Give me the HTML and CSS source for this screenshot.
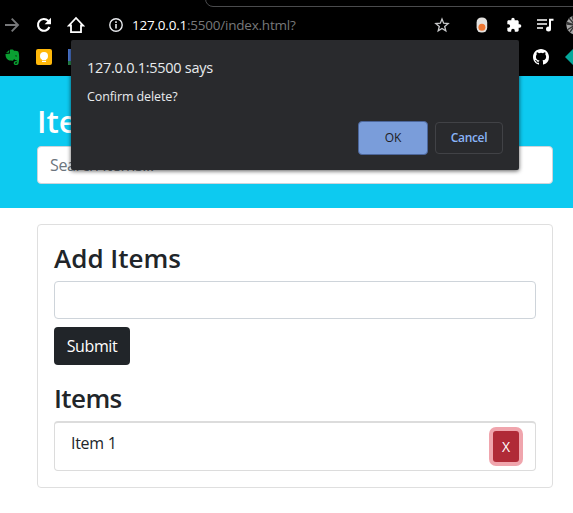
FILE: index.html
```
<!DOCTYPE html>
<html lang="en">
<head>
<meta charset="utf-8">
<title>Item Lister</title>
<link rel="stylesheet" href="styles.css">
</head>
<body>
<div class="chrome">
  <div class="tabs"><div class="tab-edge"></div></div>
  <div class="toolbar">
    <svg class="forward" width="16" height="16" viewBox="0 0 16 16"><path d="M1 8h13M7.7 1.7 14 8l-6.3 6.3" fill="none" stroke="#77787a" stroke-width="1.9"/></svg>
    <svg class="reload" width="16" height="16" viewBox="0 0 16 16"><path d="M13.4 10A5.9 5.9 0 1 1 12.2 3.8L14 5.6" fill="none" stroke="#fff" stroke-width="2.1"/><path d="M15 .8v6.4H8.6z" fill="#fff"/></svg>
    <svg class="home" width="18" height="18" viewBox="0 0 18 18"><path d="M1.900 9.500 9 2l7.100 7.500H14V16.200H4V9.500z" fill="none" stroke="#fff" stroke-width="1.800"/></svg>
    <svg class="info" width="16" height="16" viewBox="0 0 16 16"><circle cx="8" cy="8" r="6.2" fill="none" stroke="#e8eaed" stroke-width="1.4"/><path d="M8 7v4.500M8 4.300v1.700" stroke="#e8eaed" stroke-width="1.600"/></svg>
    <div class="url"><b>127.0.0.1</b>:5500/index.html?</div>
    <svg class="star" width="16" height="16" viewBox="0 0 16 16"><path d="m8 2 1.650 4.200 4.500.3-3.450 2.900 1.100 4.400L8 11.400l-3.800 2.400 1.100-4.400-3.450-2.900 4.500-.3z" fill="none" stroke="#c8c9cb" stroke-width="1.300"/></svg>
    <svg class="toggle" width="12" height="16" viewBox="0 0 12 16"><rect x=".6" y=".4" width="10.600" height="15.200" rx="5" fill="#e3e1df"/><circle cx="5.900" cy="10.300" r="3.500" fill="#ec7632"/></svg>
    <svg class="puzzle" width="16" height="16" viewBox="0 0 24 24"><path d="M20.500 11H19V7c0-1.100-.9-2-2-2h-4V3.500a2.500 2.500 0 0 0-5 0V5H4c-1.100 0-2 .9-2 2v3.800h1.500a2.700 2.700 0 0 1 0 5.400H2V20c0 1.100.9 2 2 2h3.800v-1.500a2.700 2.700 0 0 1 5.400 0V22H17c1.100 0 2-.9 2-2v-4h1.500a2.500 2.500 0 0 0 0-5z" fill="#fff"/></svg>
    <svg class="music" width="17" height="14" viewBox="0 0 17 14"><path d="M0 2h10M0 6h10M0 10h6" stroke="#fff" stroke-width="1.500"/><path d="M13 11V1.800h3.500" fill="none" stroke="#fff" stroke-width="2"/><circle cx="11.500" cy="11" r="2.500" fill="#fff"/></svg>
    <svg class="avatar" width="20" height="20" viewBox="0 0 20 20"><circle cx="10" cy="10" r="9.700" fill="#a5a5a5"/><path d="m0 7 9 3-8 5M3 3l6 7-8-1M6 1l3 9-5 7" fill="none" stroke="#343434" stroke-width="1.300"/></svg>
  </div>
  <div class="bookmarks">
    <svg class="evernote" width="15" height="17" viewBox="0 0 15 17"><path d="M4.300.9 4.200 3.500 1 4z" fill="#0a9f32"/><path d="M5 .8C7 .2 8.600.7 9 1.700c2 .1 4 .2 4.400 1.100 1 2.700 1 8.500.1 12-.5 1.700-4.800 1.800-4.800-.6 0-2.300 2-2.800 3.300-1.900v1.100c-1.300-.2-1.900.2-1.800.8.100.8 1.600.7 1.800-.1l.2-2.400C10.500 11 9.500 10.800 9 9.900c-.4 1.600-1.500 2-3.100 1.700C1.800 11 .5 8.500.5 4.900L5 4.500z" fill="#0a9f32"/><path d="M10.300 6.700c1-.5 1.700-.1 1.700.8-.6-.3-1-.3-1.700-.2z" fill="#000"/></svg>
    <svg class="keep" width="16" height="16" viewBox="0 0 16 16"><rect width="16" height="16" rx="2" fill="#ffb80a"/><circle cx="8" cy="7" r="4" fill="#fff"/><path d="M6 9h4v2H6zM6 11.800h4v1.200H6z" fill="#fff"/></svg>
    <div class="site"></div>
    <svg class="github" width="16" height="16" viewBox="0 0 16 16"><path fill="#fff" d="M8 0C3.580 0 0 3.580 0 8c0 3.540 2.290 6.530 5.470 7.590.4.070.55-.17.55-.38 0-.19-.01-.82-.01-1.490-2.010.37-2.530-.49-2.690-.94-.09-.23-.48-.94-.82-1.130-.28-.15-.68-.52-.01-.53.63-.01 1.080.58 1.230.82.72 1.210 1.870.87 2.330.66.070-.52.280-.87.510-1.070-1.780-.2-3.640-.89-3.640-3.950 0-.87.310-1.590.82-2.150-.08-.2-.36-1.020.08-2.120 0 0 .67-.21 2.200.82a7.600 7.600 0 0 1 4 0c1.530-1.040 2.200-.82 2.200-.82.440 1.100.160 1.920.080 2.120.510.560.820 1.270.820 2.150 0 3.070-1.870 3.750-3.650 3.950.290.250.540.730.540 1.480 0 1.070-.01 1.930-.01 2.200 0 .210.150.460.550.380A8 8 0 0 0 16 8c0-4.420-3.580-8-8-8z"/></svg>
    <svg class="diamond" width="16" height="16" viewBox="0 0 16 16"><path d="m0 8 8-8 8 8-8 8z" fill="#05a89b"/></svg>
  </div>
</div>
<header class="header">
  <h1>Item Lister</h1>
  <input class="field" type="text" placeholder="Search Items...">
</header>
<main class="card">
  <h2 class="add-title">Add Items</h2>
  <input class="field" type="text">
  <button class="submit">Submit</button>
  <h2 class="items-title">Items</h2>
  <ul class="list">
    <li><span>Item 1</span><button class="delete">X</button></li>
  </ul>
</main>
<div class="dialog" role="dialog">
  <div class="origin">127.0.0.1:5500 says</div>
  <div class="message">Confirm delete?</div>
  <div class="actions"><button class="ok">OK</button><button class="cancel">Cancel</button></div>
</div>
</body>
</html>
```
FILE: styles.css
```
* { box-sizing: border-box; }
body { margin: 0; height: 513px; overflow: hidden; background: #fff; color: #212529; font: 16px/24px "Open Sans", sans-serif; }
svg { display: block; flex: none; }
button, input { font: inherit; margin: 0; }
.chrome { height: 76px; background: #000; overflow: hidden; }
.tabs { height: 7px; overflow: hidden; padding-left: 205px; }
.tab-edge { height: 17px; margin-top: -10px; width: 400px; border: 1px solid #4a4b4d; border-radius: 8px; }
.toolbar { height: 36px; display: flex; align-items: center; padding-left: 4px; }
.reload { margin-left: 16px; }
.home { margin-left: 15px; }
.info { margin-left: 23px; }
.url { flex: none; width: 302px; margin-left: 8px; color: #77787a; font-size: 13.5px; letter-spacing: -.22px; white-space: nowrap; }
.url b { color: #fff; font-weight: 400; }
.toggle { margin-left: 26px; }
.puzzle { margin-left: 18px; }
.music { margin-left: 15px; }
.avatar { margin-left: 12px; }
.bookmarks { height: 33px; display: flex; align-items: flex-start; padding: 6px 0 0 5px; }
.keep { margin-left: 16px; }
.site { flex: none; width: 16px; height: 16px; margin-left: 16px; background: linear-gradient(#4c78d4 12px, #26864b 12px); }
.github { margin-left: 449px; }
.diamond { margin-left: 16px; }
.header { height: 132px; background: #0dcaf0; padding: 26px 20px 24px 37px; }
h1, h2 { margin: 0; font-weight: 600; }
h1 { color: #fff; font-size: 31px; line-height: 38px; margin-bottom: 6px; }
.field { display: block; width: 100%; height: 38px; padding: 6px 12px; border: 1px solid #ced4da; border-radius: 4px; background: #fff; letter-spacing: -.35px; }
.field::placeholder { color: #6c757d; opacity: 1; }
.card { height: 264px; margin: 16px 20px 0 37px; padding: 16px; border: 1px solid #dfdfdf; border-radius: 4px; }
h2 { height: 32px; padding-top: 1px; font-size: 26px; line-height: 32px; }
.add-title { margin-bottom: 8px; }
.submit { display: block; width: 76px; height: 38px; margin-top: 8px; padding: 0; border: 0; border-radius: 4px; background: #212529; color: #fff; letter-spacing: -.4px; }
.items-title { margin: 16px 0 8px; letter-spacing: -.6px; }
.list { list-style: none; margin: 0; padding: 0; height: 50px; border: 1px solid #dcdcdc; border-top-width: 2px; border-radius: 4px; }
.list li { display: flex; justify-content: space-between; padding: 8px 16px; letter-spacing: -.3px; }
.delete { width: 26px; height: 31px; padding: 0; border: 0; border-radius: 3px; background: #b02a37; color: #fff; font-size: 14px; box-shadow: 0 0 0 4px #f0a5ad; }
.dialog { position: absolute; left: 71px; top: 40px; width: 448px; height: 130px; padding: 16px; border-radius: 2px; background: #292a2d; color: #e8eaed; box-shadow: 0 1px 4px rgba(0,0,0,.65); }
.origin { font-size: 14.5px; line-height: 24px; letter-spacing: -.27px; white-space: nowrap; }
.message { margin-top: 7px; font-size: 12.5px; line-height: 20px; letter-spacing: -.1px; }
.actions { display: flex; justify-content: flex-end; gap: 7px; margin-top: 14px; }
.actions button { height: 34px; padding: 0; font-size: 12px; border-radius: 4px; }
.ok { width: 70px; border: 1px solid #4c669a; background: #7a9dda; color: #202124; }
.actions .cancel { height: 32px; margin-top: 1px; width: 68px; border: 1px solid #414246; background: transparent; color: #8ab4f8; font-weight: 600; letter-spacing: -.35px; }
```
